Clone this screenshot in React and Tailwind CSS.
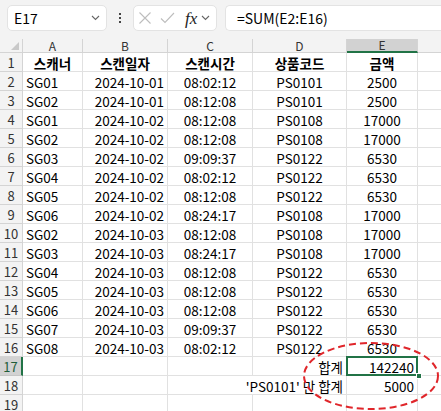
import React from 'react';

const rows = [
  ['SG01', '2024-10-01', '08:02:12', 'PS0101', '2500'],
  ['SG02', '2024-10-01', '08:12:08', 'PS0101', '2500'],
  ['SG01', '2024-10-02', '08:12:08', 'PS0108', '17000'],
  ['SG02', '2024-10-02', '08:12:08', 'PS0108', '17000'],
  ['SG03', '2024-10-02', '09:09:37', 'PS0122', '6530'],
  ['SG04', '2024-10-02', '08:02:12', 'PS0122', '6530'],
  ['SG05', '2024-10-02', '08:12:08', 'PS0122', '6530'],
  ['SG06', '2024-10-02', '08:24:17', 'PS0108', '17000'],
  ['SG02', '2024-10-03', '08:12:08', 'PS0108', '17000'],
  ['SG03', '2024-10-03', '08:24:17', 'PS0108', '17000'],
  ['SG04', '2024-10-03', '08:12:08', 'PS0122', '6530'],
  ['SG05', '2024-10-03', '08:12:08', 'PS0122', '6530'],
  ['SG06', '2024-10-03', '08:12:08', 'PS0122', '6530'],
  ['SG07', '2024-10-03', '09:09:37', 'PS0122', '6530'],
  ['SG08', '2024-10-03', '08:02:12', 'PS0122', '6530'],
];

const cols = ['A', 'B', 'C', 'D', 'E'];
const align = ['justify-start pl-[3px]', 'justify-end pr-[3px]', 'justify-center', 'justify-center', 'justify-center'];

const Cell = ({ children, className = '' }) => (
  <div className={`h-[19px] flex items-center pt-[2px] border-r border-b border-[#e1e1e1] whitespace-nowrap ${className}`}>
    {children}
  </div>
);

const RowHead = ({ n, active }) => (
  <div
    className={`h-[19px] flex items-center justify-center pt-[1px] border-b text-[13px] ${
      active
        ? 'bg-[#d2d2d2] text-[#1e5e3a] border-r-2 border-r-[#217346] border-b-[#c6c6c6]'
        : 'bg-[#f3f3f3] text-[#333] border-r border-[#d4d4d4]'
    }`}
  >
    {n}
  </div>
);

const Chevron = () => (
  <svg width="9" height="6" viewBox="0 0 9 6" fill="none" stroke="#666" strokeWidth="1.1">
    <path d="M1 1l3.5 3.5L8 1" />
  </svg>
);

export default function App() {
  return (
    <div className="w-[441px] h-[411px] overflow-hidden bg-white relative font-['Noto_Sans_CJK_KR',sans-serif] text-[13.5px] text-black">
      {/* formula bar */}
      <div className="h-[39px] bg-[#f3f3f3] flex items-start pt-[5px] pl-[7px] gap-[8px]">
        <div className="w-[100px] h-[26px] bg-white rounded-[5px] border border-[#e3e3e3] flex items-center justify-between pl-[6px] pr-[6px]">
          <span className="text-[14px]">E17</span>
          <Chevron />
        </div>
        <div className="h-[26px] w-[10px] flex flex-col items-center justify-center gap-[2px]">
          <span className="w-[2px] h-[2px] bg-[#444]" />
          <span className="w-[2px] h-[2px] bg-[#444]" />
          <span className="w-[2px] h-[2px] bg-[#444]" />
        </div>
        <div className="w-[84px] h-[26px] bg-white rounded-[5px] border border-[#e3e3e3] flex items-center pl-[4px] gap-[8px]">
          <svg width="14" height="14" viewBox="0 0 14 14" stroke="#bdbdbd" strokeWidth="1.1">
            <path d="M1.5 1.5l11 11M12.5 1.5l-11 11" />
          </svg>
          <svg width="15" height="12" viewBox="0 0 15 12" fill="none" stroke="#bdbdbd" strokeWidth="1.1">
            <path d="M1 6.5l4 4L14 1" />
          </svg>
          <span className="font-['Liberation_Serif',serif] italic text-[17px] leading-none ml-[2px] text-[#222]">fx</span>
          <span className="-ml-[4px]"><Chevron /></span>
        </div>
        <div className="flex-1 h-[26px] bg-white rounded-l-[5px] border border-r-0 border-[#e3e3e3] flex items-center pl-[11px] text-[14px]">
          =SUM(E2:E16)
        </div>
      </div>

      {/* sheet */}
      <div className="grid grid-cols-[23px_60px_85px_85px_94px_71px_1fr]">
        <div className="h-[14px] bg-[#f3f3f3] border-r border-b border-[#d4d4d4] relative">
          <svg className="absolute right-[3px] bottom-[2px]" width="8" height="8" viewBox="0 0 8 8">
            <path d="M8 0v8H0z" fill="#c9c9c9" />
          </svg>
        </div>
        {cols.map((c) => (
          <div
            key={c}
            className={`h-[14px] flex items-center justify-center text-[12px] leading-none text-[#333] border-r border-[#d4d4d4] ${
              c === 'E' ? 'bg-[#d2d2d2] border-b-2 border-b-[#217346]' : 'bg-[#f3f3f3] border-b'
            }`}
          >
            {c}
          </div>
        ))}
        <div className="h-[14px] bg-[#f3f3f3] border-b border-[#d4d4d4]" />

        <RowHead n={1} />
        {['스캐너', '스캔일자', '스캔시간', '상품코드', '금액'].map((h) => (
          <Cell key={h} className="justify-center font-bold">{h}</Cell>
        ))}
        <Cell className="border-r-0" />

        {rows.map((r, i) => (
          <React.Fragment key={i}>
            <RowHead n={i + 2} />
            {r.map((v, j) => (
              <Cell key={j} className={align[j]}>{v}</Cell>
            ))}
            <Cell className="border-r-0" />
          </React.Fragment>
        ))}

        <RowHead n={17} active />
        <Cell />
        <Cell />
        <Cell />
        <Cell className="justify-end pr-[3px]">합계</Cell>
        <div className="h-[19px] relative border-b border-[#e1e1e1]">
          <div className="absolute -left-[1px] -top-[1px] w-[72px] h-[20px] pt-[2px] border-2 border-[#217346] flex items-center justify-end pr-[2px]">
            142240
          </div>
          <span className="absolute right-[-4px] bottom-[-4px] w-[6px] h-[6px] bg-[#217346] border border-white" />
        </div>
        <Cell className="border-r-0" />

        <RowHead n={18} />
        <Cell />
        <Cell />
        <Cell className="border-r-0" />
        <Cell className="justify-end pr-[3px] overflow-visible">
          <span className="whitespace-nowrap">'PS0101' 만 합계</span>
        </Cell>
        <Cell className="justify-end pr-[3px]">5000</Cell>
        <Cell className="border-r-0" />

        <RowHead n={19} />
        <Cell />
        <Cell />
        <Cell />
        <Cell />
        <Cell />
        <Cell className="border-r-0" />
      </div>

      {/* red dashed ellipse annotation */}
      <svg className="absolute left-0 top-0 pointer-events-none" width="441" height="411">
        <ellipse cx="371" cy="376" rx="67" ry="33" fill="none" stroke="#e0262b" strokeWidth="2" strokeDasharray="7 4" />
      </svg>
    </div>
  );
}
